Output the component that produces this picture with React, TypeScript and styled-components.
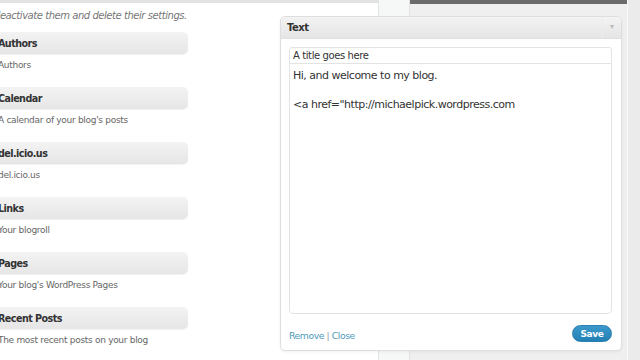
import styled, { createGlobalStyle } from "styled-components";

const GlobalStyle = createGlobalStyle`
  html, body {
    margin: 0;
    padding: 0;
  }
  body {
    width: 640px;
    height: 360px;
    overflow: hidden;
    background: #efefef;
    font-family: "DejaVu Sans", "Liberation Sans", sans-serif;
  }
`;

const widgets = [
  { title: "Authors", desc: "Authors" },
  { title: "Calendar", desc: "A calendar of your blog's posts" },
  { title: "del.icio.us", desc: "del.icio.us" },
  { title: "Links", desc: "Your blogroll" },
  { title: "Pages", desc: "Your blog's WordPress Pages" },
  { title: "Recent Posts", desc: "The most recent posts on your blog" },
];

function WidgetItem({ title, desc }: { title: string; desc: string }) {
  return (
    <S_Item>
      <S_Bar>{title}</S_Bar>
      <S_Desc>{desc}</S_Desc>
    </S_Item>
  );
}

function TextWidget() {
  return (
    <S_Popup>
      <S_PopupHead>
        <span className="title">Text</span>
        <span className="toggle">▾</span>
      </S_PopupHead>
      <S_PopupBody>
        <S_TitleInput defaultValue="A title goes here" />
        <S_TextArea
          defaultValue={
            'Hi, and welcome to my blog.\n\n<a href="http://michaelpick.wordpress.com'
          }
        />
        <S_Footer>
          <p className="links">
            <a href="#remove">Remove</a>
            <span className="sep"> | </span>
            <a href="#close">Close</a>
          </p>
          <S_SaveButton type="button">Save</S_SaveButton>
        </S_Footer>
      </S_PopupBody>
    </S_Popup>
  );
}

export default function App() {
  return (
    <>
      <GlobalStyle />
      <S_Page>
        <S_LeftPanel>
          <S_Column>
            <S_Intro>deactivate them and delete their settings.</S_Intro>
            {widgets.map((w) => (
              <WidgetItem key={w.title} title={w.title} desc={w.desc} />
            ))}
          </S_Column>
        </S_LeftPanel>
        <S_Gutter />
        <S_Main />
        <S_Edge />
        <TextWidget />
      </S_Page>
    </>
  );
}

const S_Page = styled.div`
  position: relative;
  display: flex;
  width: 640px;
  height: 360px;
  overflow: hidden;
`;

const S_LeftPanel = styled.div`
  width: 379px;
  box-sizing: border-box;
  background: #fff;
  border-top: 3px solid #e2e2e2;
  border-right: 1px solid #e4e4e4;
  overflow: hidden;
`;

const S_Column = styled.div`
  margin-left: -8px;
  width: 196px;
`;

const S_Intro = styled.p`
  margin: 6px 0 9px 2px;
  font-size: 10px;
  line-height: 14px;
  font-style: italic;
  letter-spacing: -0.45px;
  color: #777;
  white-space: nowrap;
`;

const S_Item = styled.div`
  margin-bottom: 15px;
`;

const S_Bar = styled.div`
  height: 22px;
  box-sizing: border-box;
  padding-left: 6px;
  display: flex;
  align-items: center;
  border-radius: 0 5px 5px 0;
  background: linear-gradient(#f3f3f3, #e6e6e6);
  box-shadow: 0 1px 1px rgba(0, 0, 0, 0.06);
  font-size: 9.6px;
  font-weight: bold;
  letter-spacing: -0.55px;
  color: #333;
`;

const S_Desc = styled.p`
  margin: 4px 0 0;
  padding-left: 6px;
  font-size: 9px;
  line-height: 14px;
  letter-spacing: -0.3px;
  color: #666;
  white-space: nowrap;
`;

const S_Gutter = styled.div`
  width: 31px;
  box-sizing: border-box;
  background: #f6f8f8;
  border-right: 1px solid #e2e2e2;
`;

const S_Main = styled.div`
  flex: 1;
  background: #efefef;
  border-top: 4px solid #6b6b6b;
`;

const S_Edge = styled.div`
  width: 13px;
  box-sizing: border-box;
  background: #ebebeb;
  border-left: 1px solid #f9f9f9;
`;

const S_Popup = styled.div`
  position: absolute;
  left: 280px;
  top: 16px;
  width: 342px;
  height: 335px;
  box-sizing: border-box;
  display: flex;
  flex-direction: column;
  background: #fff;
  border: 1px solid #dedede;
  border-radius: 5px;
  box-shadow: 0 1px 3px rgba(0, 0, 0, 0.06);
  overflow: hidden;
`;

const S_PopupHead = styled.div`
  height: 22px;
  box-sizing: border-box;
  display: flex;
  align-items: center;
  background: linear-gradient(#f3f3f3, #e5e5e5);
  border-bottom: 1px solid #e0e0e0;

  .title {
    flex-grow: 1;
    padding-left: 6px;
    font-size: 10px;
    font-weight: bold;
    letter-spacing: -0.5px;
    color: #333;
  }

  .toggle {
    width: 19px;
    height: 100%;
    display: flex;
    align-items: center;
    justify-content: center;
    padding-bottom: 2px;
    box-sizing: border-box;
    border-left: 1px solid #ececec;
    font-size: 8px;
    color: #bbb;
  }
`;

const S_PopupBody = styled.div`
  flex-grow: 1;
  display: flex;
  flex-direction: column;
  padding: 8px 9px 0 8px;
`;

const S_TitleInput = styled.input`
  height: 17px;
  box-sizing: border-box;
  margin: 0;
  padding: 0 3px;
  border: 1px solid #e3e3e3;
  border-radius: 3px 3px 0 0;
  font-family: inherit;
  font-size: 10px;
  letter-spacing: -0.4px;
  color: #333;
  outline: none;
`;

const S_TextArea = styled.textarea`
  height: 251px;
  box-sizing: border-box;
  margin: -1px 0 0;
  padding: 5px 3px 3px;
  border: 1px solid #e3e3e3;
  border-radius: 0 0 4px 4px;
  resize: none;
  overflow: hidden;
  font-family: inherit;
  font-size: 11px;
  line-height: 14.5px;
  letter-spacing: -0.5px;
  color: #333;
  outline: none;
`;

const S_Footer = styled.div`
  display: flex;
  align-items: center;
  justify-content: space-between;
  margin-top: 11px;

  .links {
    margin: 3px 0 0;
    font-size: 9.3px;
    letter-spacing: -0.45px;
    color: #999;

    a {
      color: #4f9abb;
      text-decoration: none;
    }
  }
`;

const S_SaveButton = styled.button`
  width: 40px;
  height: 17px;
  padding: 0;
  border: 1px solid #2a7fae;
  border-radius: 9px;
  background: linear-gradient(#3a98cb, #2280b4);
  font-family: inherit;
  font-size: 9px;
  font-weight: bold;
  letter-spacing: -0.4px;
  color: #fff;
`;
